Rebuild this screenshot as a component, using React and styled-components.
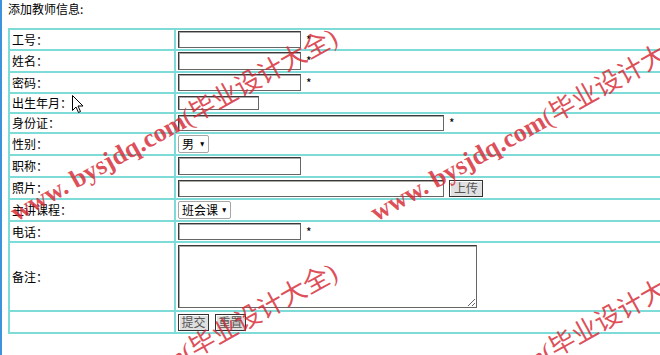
import React from 'react';
import styled, { createGlobalStyle } from 'styled-components';

const line = '#7ddcd8';

const GlobalStyle = createGlobalStyle`
  html, body {
    margin: 0;
    padding: 0;
    overflow: hidden;
    background: #fff;
  }
  body {
    font-family: "Noto Sans CJK SC", "Liberation Sans", sans-serif;
    font-size: 12px;
    color: #000;
  }
`;

const Page = styled.div`
  position: relative;
  width: 660px;
  height: 355px;
  box-sizing: border-box;
  border-left: 2px solid #3d92dc;
  padding-left: 6px;
  overflow: hidden;
`;

const Heading = styled.div`
  height: 28px;
  box-sizing: border-box;
  padding-top: 1px;
  line-height: 16px;
`;

const FormTable = styled.table`
  width: 720px;
  border-collapse: separate;
  border-spacing: 0;
  border: 1px solid ${line};
`;

const Label = styled.td`
  width: 160px;
  height: ${p => p.$h}px;
  padding: 1px 2px;
  border: 1px solid ${line};
  line-height: 16px;
  vertical-align: middle;
`;

const Field = styled.td`
  height: ${p => p.$h}px;
  padding: 1px 2px;
  border: 1px solid ${line};
  vertical-align: middle;
`;

const FieldRow = styled.div`
  display: flex;
  align-items: center;
  gap: ${p => p.$gap ?? 5}px;
  line-height: 16px;
`;

const Input = styled.input`
  width: ${p => p.$w}px;
  height: ${p => p.$h ?? 17}px;
  box-sizing: border-box;
  margin: 0;
  padding: 0 2px;
  border: 1px solid #666;
  border-top-color: #3a3a3a;
  border-left-color: #3a3a3a;
  box-shadow: inset 1px 1px 0 #a8a8a8;
  background: #fff;
  font: inherit;
`;

const TextArea = styled.textarea`
  width: ${p => p.$w}px;
  height: ${p => p.$h}px;
  box-sizing: border-box;
  margin: 0;
  padding: 2px;
  border: 1px solid #666;
  border-top-color: #3a3a3a;
  border-left-color: #3a3a3a;
  box-shadow: inset 1px 1px 0 #a8a8a8;
  font: inherit;
  resize: both;
`;

const Star = styled.span`
  font-size: 12px;
`;

const SelectWrap = styled.span`
  position: relative;
  display: inline-block;
`;

const Select = styled.select`
  appearance: none;
  width: ${p => p.$w}px;
  height: 18px;
  margin: 0;
  padding: 0 0 0 3px;
  border: 1px solid #a6a6a6;
  border-radius: 2px;
  background: #fff;
  color: #000;
  font: inherit;
`;

const Arrow = styled.span`
  position: absolute;
  right: 4px;
  top: 50%;
  transform: translateY(-50%) scaleX(0.85);
  font-family: "DejaVu Sans", sans-serif;
  font-size: 6px;
  line-height: 6px;
  pointer-events: none;
`;

const Button = styled.button`
  width: ${p => p.$w}px;
  height: 17px;
  margin: 0;
  padding: 0;
  border: 1px solid #333;
  box-shadow: inset 1px 1px 0 #fff;
  background: #e0e0e0;
  color: #555;
  font: inherit;
  line-height: 14px;
`;

const Watermark = styled.div`
  position: absolute;
  left: ${p => p.$x}px;
  top: ${p => p.$y}px;
  transform-origin: 0 100%;
  transform: rotate(-29deg);
  white-space: nowrap;
  font-family: "Liberation Serif", "Noto Sans CJK SC", serif;
  font-weight: bold;
  font-size: 26px;
  line-height: 26px;
  color: rgba(214, 40, 52, 0.82);
  pointer-events: none;
`;

const MarkCn = styled.span`
  font-weight: normal;
`;

const Cursor = styled.svg`
  position: absolute;
  left: 70px;
  top: 95px;
`;

const rows = [
  { label: '工号：', h: 17, kind: 'input', w: 123, star: true },
  { label: '姓名：', h: 18, kind: 'input', w: 123, star: true },
  { label: '密码：', h: 17, kind: 'input', w: 123, star: true, type: 'password' },
  { label: '出生年月：', h: 16, kind: 'input', w: 81, ih: 14 },
  { label: '身份证：', h: 16, kind: 'input', w: 266, ih: 16, star: true },
  { label: '性别：', h: 18, kind: 'select', w: 31, value: '男' },
  { label: '职称：', h: 18, kind: 'input', w: 123 },
  { label: '照片：', h: 18, kind: 'upload', w: 266 },
  { label: '主讲课程：', h: 18, kind: 'select', w: 53, value: '班会课' },
  { label: '电话：', h: 17, kind: 'input', w: 123, star: true },
  { label: '备注：', h: 65, kind: 'textarea', w: 299 },
];

const renderField = r => {
  switch (r.kind) {
    case 'select':
      return (
        <SelectWrap>
          <Select $w={r.w} defaultValue={r.value}>
            <option>{r.value}</option>
          </Select>
          <Arrow>▼</Arrow>
        </SelectWrap>
      );
    case 'upload':
      return (
        <>
          <Input $w={r.w} />
          <Button $w={34} type="button">上传</Button>
        </>
      );
    case 'textarea':
      return <TextArea $w={r.w} $h={63} />;
    default:
      return (
        <>
          <Input $w={r.w} $h={r.ih ?? r.h} type={r.type || 'text'} />
          {r.star && <Star>*</Star>}
        </>
      );
  }
};

const marks = [
  { x: 17, y: 200 },
  { x: 377, y: 200 },
  { x: 17, y: 435 },
  { x: 377, y: 435 },
];

export default function App() {
  return (
    <Page>
      <GlobalStyle />
      <Heading>添加教师信息:</Heading>
      <FormTable>
        <tbody>
          {rows.map(r => (
            <tr key={r.label}>
              <Label $h={r.h}>{r.label}</Label>
              <Field $h={r.h}>
                <FieldRow>{renderField(r)}</FieldRow>
              </Field>
            </tr>
          ))}
          <tr>
            <Label $h={18}></Label>
            <Field $h={18}>
              <FieldRow $gap={6}>
                <Button $w={31} type="submit">提交</Button>
                <Button $w={31} type="reset">重置</Button>
              </FieldRow>
            </Field>
          </tr>
        </tbody>
      </FormTable>
      {marks.map((m, i) => (
        <Watermark key={i} $x={m.x} $y={m.y}>
          www. bysjdq.com<MarkCn>(毕业设计大全)</MarkCn>
        </Watermark>
      ))}
      <Cursor width="12" height="19" viewBox="0 0 12 19">
        <path d="M0.5 0.5 L0.5 15.5 L4 12 L6.5 17.5 L8.5 16.5 L6 11 L11 11 Z" fill="#fff" stroke="#000" strokeWidth="1" />
      </Cursor>
    </Page>
  );
}
